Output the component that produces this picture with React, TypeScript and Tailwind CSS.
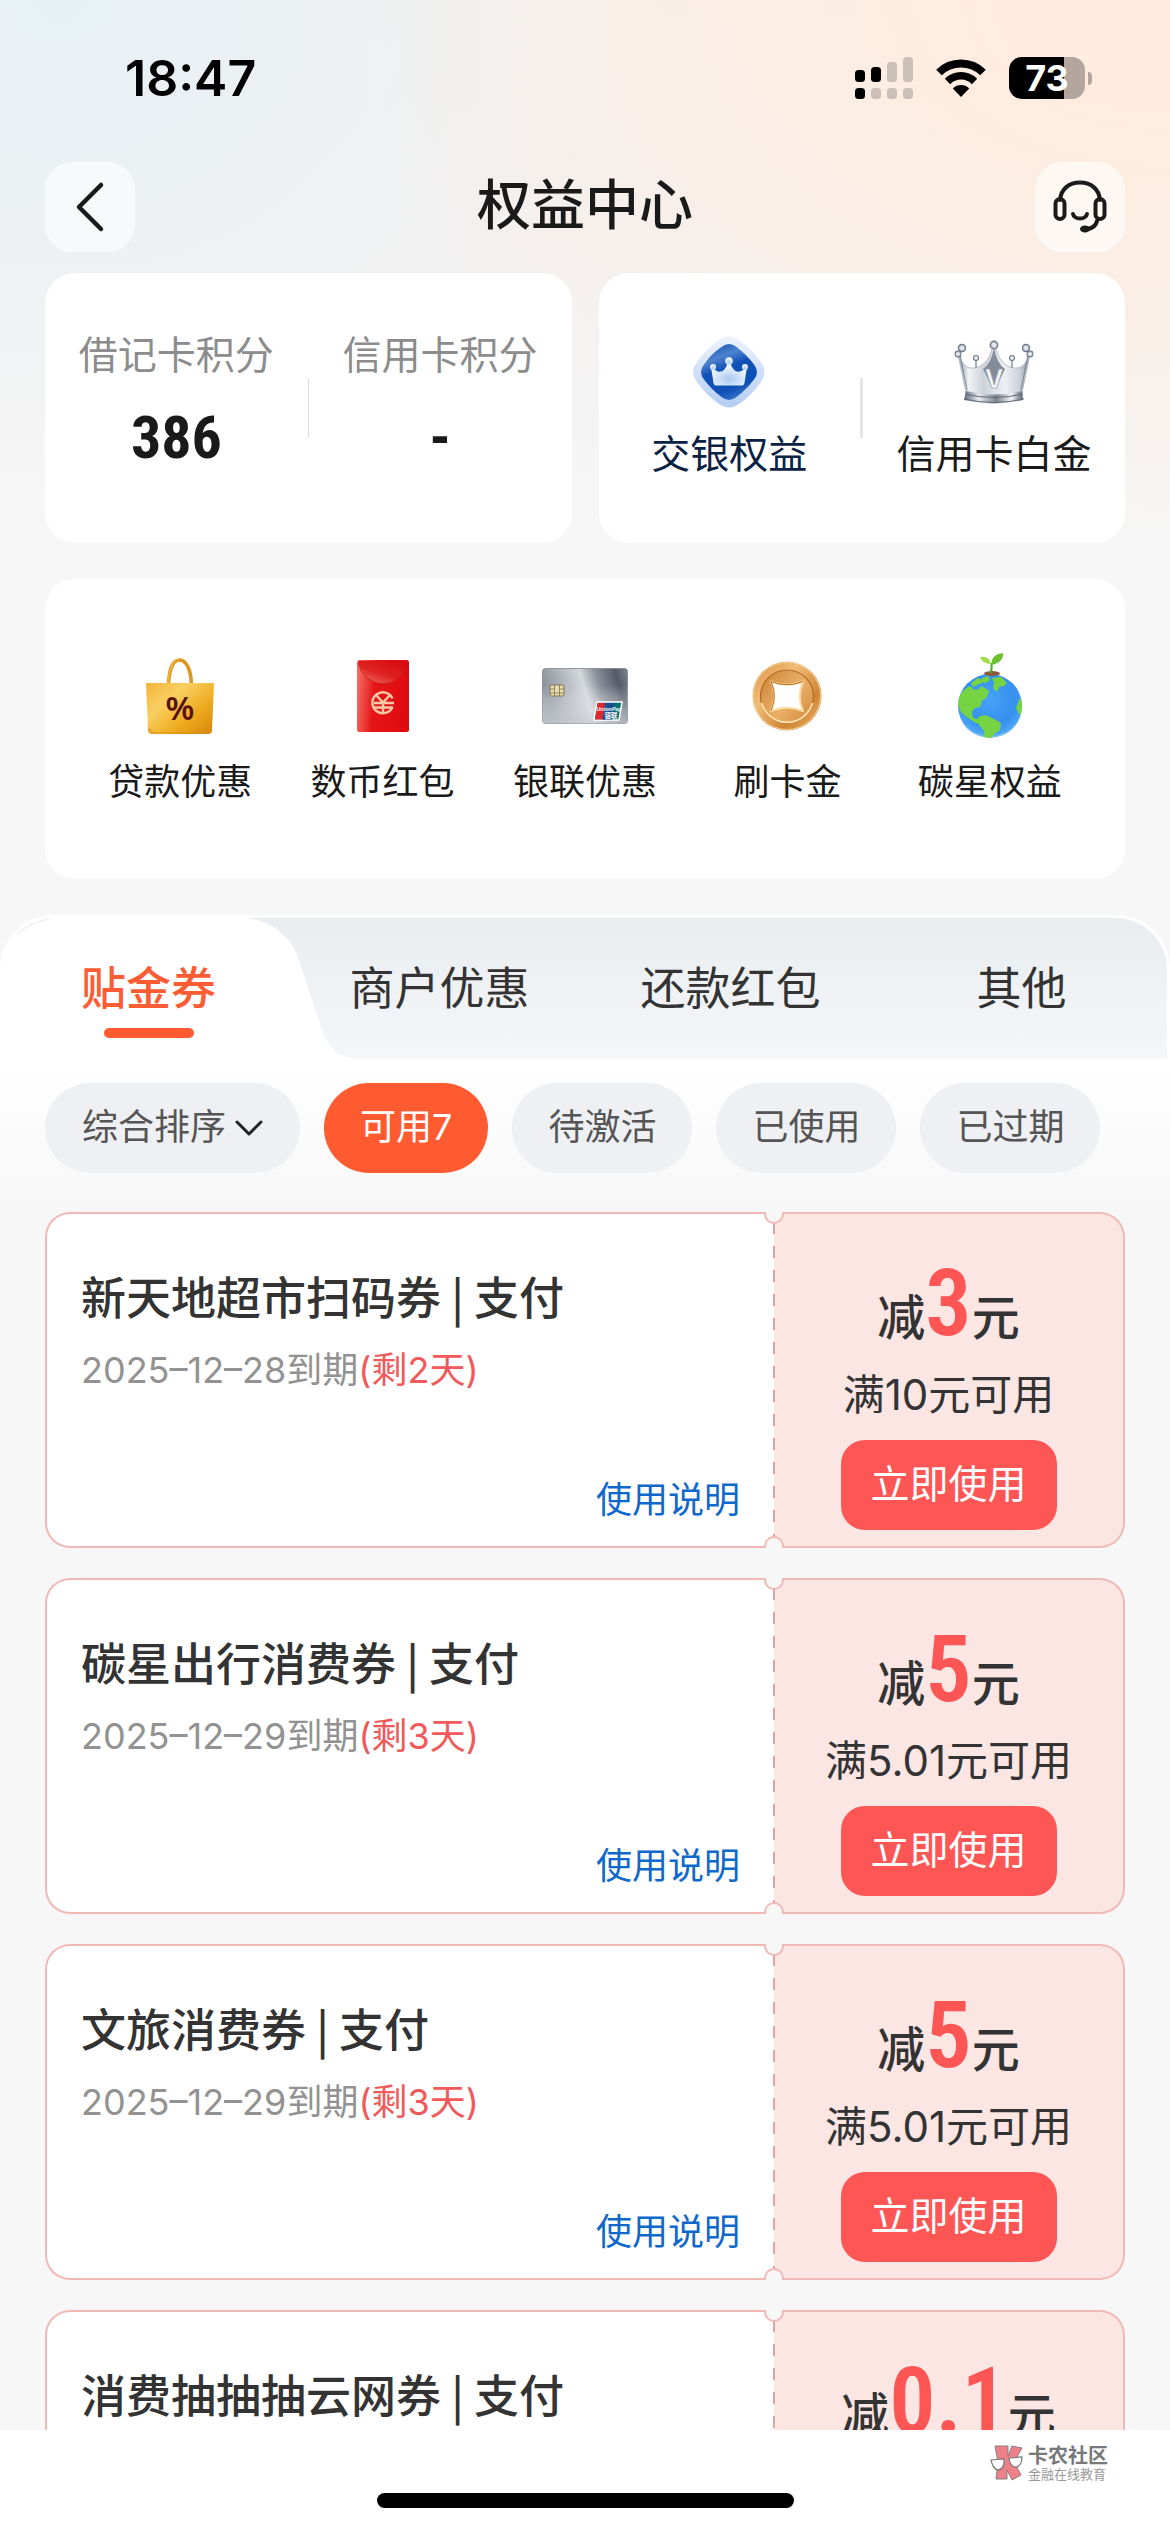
import type { ReactNode } from "react";

type Coupon = {
  title: string;
  date: string;
  left: string;
  amount: string;
  condition: string;
};

const coupons: Coupon[] = [
  { title: "新天地超市扫码券 | 支付", date: "2025–12–28到期", left: "(剩2天)", amount: "3", condition: "满10元可用" },
  { title: "碳星出行消费券 | 支付", date: "2025–12–29到期", left: "(剩3天)", amount: "5", condition: "满5.01元可用" },
  { title: "文旅消费券 | 支付", date: "2025–12–29到期", left: "(剩3天)", amount: "5", condition: "满5.01元可用" },
  { title: "消费抽抽抽云网券 | 支付", date: "2025–12–29到期", left: "(剩3天)", amount: "0.1", condition: "满1元可用" },
];

function SignalIcon() {
  return (
    <svg width="58" height="42" viewBox="0 0 58 42" aria-hidden="true">
      <g fill="#000">
        <rect x="0" y="13" width="10" height="12" rx="3.5" />
        <rect x="16" y="10" width="10" height="15" rx="3.5" />
        <rect x="0" y="31" width="10" height="11" rx="3.5" />
      </g>
      <g fill="#cbc0b9">
        <rect x="32" y="5" width="10" height="20" rx="3.5" />
        <rect x="48" y="0" width="10" height="25" rx="3.5" />
        <rect x="16" y="31" width="10" height="11" rx="3.5" />
        <rect x="32" y="31" width="10" height="11" rx="3.5" />
        <rect x="48" y="31" width="10" height="11" rx="3.5" />
      </g>
    </svg>
  );
}

function WifiIcon() {
  return (
    <svg width="52" height="38" viewBox="0 0 52 38" fill="none" aria-hidden="true">
      <path d="M4 13.5a31.5 31.5 0 0 1 44 0" stroke="#000" strokeWidth="8" />
      <path d="M12.5 22.5a19 19 0 0 1 27 0" stroke="#000" strokeWidth="7.5" />
      <path d="M26 38l-8.2-8.6a11.6 11.6 0 0 1 16.4 0z" fill="#000" />
    </svg>
  );
}

function Battery() {
  return (
    <div className="flex items-center gap-[3px]">
      <div className="flex h-[42px] w-[76px] items-center justify-center rounded-[13px] bg-[linear-gradient(90deg,#000_73%,#b2a69f_73%)] font-['Inter',sans-serif] text-[36px] leading-none font-bold text-white">
        73
      </div>
      <div className="h-[13px] w-[4px] rounded-r-full bg-[#b2a69f]" />
    </div>
  );
}

function BackIcon() {
  return (
    <svg width="30" height="52" viewBox="0 0 30 52" fill="none" stroke="#1a1a1a" strokeWidth="4.5" strokeLinecap="round" strokeLinejoin="round" aria-hidden="true">
      <path d="M26 4L4 26L26 48" />
    </svg>
  );
}

function HeadsetIcon() {
  return (
    <svg width="54" height="54" viewBox="0 0 54 54" fill="none" stroke="#1a1a1a" strokeWidth="4" strokeLinecap="round" aria-hidden="true">
      <path d="M7 20C8 9 16 2.500 27 2.500S46 9 47 20" />
      <rect x="2.500" y="19" width="9" height="20" rx="4.500" />
      <rect x="42.500" y="19" width="9" height="20" rx="4.500" />
      <path d="M20 34c1 6 13 6 14 0" />
      <path d="M44 41c-1 5-5 7-9 8" />
      <ellipse cx="32" cy="49" rx="5" ry="3.600" fill="#1a1a1a" stroke="none" />
    </svg>
  );
}

function DiamondIcon() {
  return (
    <svg width="72" height="72" viewBox="0 0 72 72" aria-hidden="true">
      <defs>
        <linearGradient id="dia-a" x1="0" y1="0" x2="0" y2="1">
          <stop offset="0" stopColor="#edf3fd" />
          <stop offset="1" stopColor="#b4cdf3" />
        </linearGradient>
        <linearGradient id="dia-b" x1="0.2" y1="0" x2="0.6" y2="1">
          <stop offset="0" stopColor="#1550b4" />
          <stop offset="0.25" stopColor="#4e83cf" />
          <stop offset="0.45" stopColor="#1152b8" />
          <stop offset="0.8" stopColor="#0c4fb5" />
          <stop offset="1" stopColor="#3b74cb" />
        </linearGradient>
        <radialGradient id="dia-c" cx="0.5" cy="0.7" r="0.6">
          <stop offset="0" stopColor="#a9c9f2" />
          <stop offset="1" stopColor="#f3f8ff" />
        </radialGradient>
      </defs>
      <path d="M26 4Q36-3.500 46 4Q60 14 68 26Q75 36 68 46Q58 60 46 68Q36 75 26 68Q12 58 4 46Q-3.500 36 4 26Q13 13 26 4Z" fill="url(#dia-a)" />
      <path d="M28.500 11Q36 5 43.500 11Q54 19 61 28.500Q67 36 61 43.500Q53 54 43.500 61Q36 67 28.500 61Q18 53 11 43.500Q5 36 11 28.500Q18 18 28.500 11Z" fill="url(#dia-b)" />
      <g fill="url(#dia-c)">
        <path d="M18 31l5.500 4Q31 38 34.500 27.500h3Q41 38 48.500 35l5.500-4-2.500 16q-.5 2.500-2.500 2.500H23q-2 0-2.500-2.500z" />
        <circle cx="36" cy="25" r="3.800" />
        <circle cx="20" cy="31" r="3" />
        <circle cx="52" cy="31" r="3" />
      </g>
    </svg>
  );
}

function CrownIcon() {
  return (
    <svg width="80" height="64" viewBox="0 0 80 64" aria-hidden="true">
      <defs>
        <linearGradient id="crown-a" x1="0" y1="0" x2="1" y2="0">
          <stop offset="0" stopColor="#929ba7" />
          <stop offset="0.15" stopColor="#f0f2f5" />
          <stop offset="0.35" stopColor="#cdd2d8" />
          <stop offset="0.65" stopColor="#edf0f3" />
          <stop offset="0.85" stopColor="#ccd2d9" />
          <stop offset="1" stopColor="#8c95a3" />
        </linearGradient>
        <linearGradient id="crown-b" x1="0" y1="0" x2="1" y2="0">
          <stop offset="0" stopColor="#5b6676" />
          <stop offset="0.25" stopColor="#e9ecf0" />
          <stop offset="0.55" stopColor="#79838f" />
          <stop offset="0.8" stopColor="#f4f5f7" />
          <stop offset="1" stopColor="#566172" />
        </linearGradient>
        <radialGradient id="crown-c">
          <stop offset="0" stopColor="#fff" />
          <stop offset="0.5" stopColor="#cfd4dc" />
          <stop offset="1" stopColor="#4e5969" />
        </radialGradient>
      </defs>
      <path d="M4 14Q10 30 20 28Q33 27 38.500 8h3Q47 27 60 28Q70 30 76 14L68 53Q40 60 12 53Z" fill="url(#crown-a)" stroke="#a9b1bc" strokeWidth="0.800" />
      <path d="M6 14l7 36M74 14l-7 36" stroke="#7c8695" strokeWidth="1" />
      <path d="M40 8Q43 24 51 29L41.500 48h-3L29 29Q37 24 40 8Z" fill="#858c99" />
      <text x="40" y="48" textAnchor="middle" fontFamily="Inter, sans-serif" fontWeight="700" fontSize="25" fill="#f3f5f7" stroke="#8b94a1" strokeWidth="0.700">V</text>
      <path d="M22 28V20M58 28V20" stroke="#8b95a3" strokeWidth="1.500" />
      <path d="M12 51Q40 58 68 51L69 60Q40 67 10 60Z" fill="url(#crown-b)" />
      <path d="M11 54Q40 61 69 54M10 59Q40 66 70 59" fill="none" stroke="#5f6978" strokeWidth="1" />
      <g fill="url(#crown-c)">
        <circle cx="40" cy="5" r="4.400" />
        <circle cx="8" cy="8" r="4.200" />
        <circle cx="72" cy="8" r="4.200" />
        <circle cx="4" cy="14" r="3.400" />
        <circle cx="76" cy="14" r="3.400" />
        <circle cx="22" cy="18" r="3" />
        <circle cx="58" cy="18" r="3" />
      </g>
    </svg>
  );
}

function BagIcon() {
  return (
    <svg width="68" height="78" viewBox="0 0 68 78" aria-hidden="true">
      <defs>
        <linearGradient id="bag-a" x1="0" y1="0" x2="1" y2="0.900">
          <stop offset="0" stopColor="#f2b53c" />
          <stop offset="0.35" stopColor="#f9cf62" />
          <stop offset="0.7" stopColor="#eeaa1e" />
          <stop offset="1" stopColor="#d98a0c" />
        </linearGradient>
      </defs>
      <path d="M22.500 28C23 12 27 3 33.500 3S45 12 45.500 28" fill="none" stroke="#e0961c" strokeWidth="3.600" />
      <path d="M22 28C22.500 12 27 2.500 33 2" fill="none" stroke="#f4bd4e" strokeWidth="1.200" />
      <path d="M0 26H68L66 73Q66 77 62 77H6Q2 77 2 73Z" fill="url(#bag-a)" />
      <path d="M2 70L8 75H60L66 70L65.500 74Q65 77 62 77H6Q2.500 77 2 74Z" fill="#d88b10" opacity="0.450" />
      <text x="34" y="63" textAnchor="middle" fontFamily="Noto Sans, sans-serif" fontWeight="600" fontSize="33" fill="#5b120c">%</text>
    </svg>
  );
}

function EnvelopeIcon() {
  return (
    <svg width="54" height="72" viewBox="0 0 54 72" aria-hidden="true">
      <defs>
        <linearGradient id="env-a" x1="0" y1="0.200" x2="1" y2="0.300">
          <stop offset="0" stopColor="#f56e66" />
          <stop offset="0.35" stopColor="#e51618" />
          <stop offset="1" stopColor="#e00a0e" />
        </linearGradient>
        <linearGradient id="env-b" x1="0" y1="1" x2="0.800" y2="0">
          <stop offset="0" stopColor="#f3756a" />
          <stop offset="0.5" stopColor="#dd2422" />
          <stop offset="1" stopColor="#d80a10" />
        </linearGradient>
      </defs>
      <rect x="1" width="52" height="72" rx="2.500" fill="url(#env-a)" />
      <path d="M2 1H52Q47 23 27 24Q7 22 2 1Z" fill="url(#env-b)" />
      <path d="M2 3Q8 23 27 24Q47 23 52 3" fill="none" stroke="#c41416" strokeWidth="0.700" />
      <g fill="none" stroke="#fbc9a6" strokeWidth="2.400">
        <path d="M36.500 47A10.500 10.500 0 1 1 36.500 38.500" />
        <path d="M20 35L27 42.500L34 35M27 42.500V53.500M18 43H38M18 47.500H37" />
      </g>
    </svg>
  );
}

function BankCardIcon() {
  return (
    <svg width="86" height="56" viewBox="0 0 86 56" aria-hidden="true">
      <defs>
        <linearGradient id="card-a" x1="0" y1="0.200" x2="1" y2="0">
          <stop offset="0" stopColor="#8f949d" />
          <stop offset="0.45" stopColor="#d5d8dd" />
          <stop offset="0.62" stopColor="#8c929c" />
          <stop offset="0.85" stopColor="#535b68" />
          <stop offset="1" stopColor="#7e858f" />
        </linearGradient>
        <linearGradient id="card-b" x1="0" y1="0" x2="0" y2="1">
          <stop offset="0.3" stopColor="#fff" stopOpacity="0" />
          <stop offset="1" stopColor="#cfd3d9" stopOpacity="0.700" />
        </linearGradient>
      </defs>
      <rect x="0.500" y="0.500" width="85" height="55" rx="3" fill="url(#card-a)" stroke="#7e858f" strokeWidth="0.800" />
      <rect x="0.500" y="0.500" width="85" height="55" rx="3" fill="url(#card-b)" />
      <rect x="8" y="17" width="14" height="11" rx="2" fill="#e9dcaf" stroke="#6f6646" strokeWidth="0.800" />
      <path d="M8 21h4.500v-4M8 25h4.500v3M22 21h-4.500v-4M22 25h-4.500v3M12.500 21v4h5v-4" fill="none" stroke="#6f6646" strokeWidth="0.700" />
      <path d="M55 34H80L77 52H52Z" fill="#04706f" stroke="#fff" strokeWidth="1.500" />
      <path d="M55.500 35H66L63 51.500H53Z" fill="#e0282f" />
      <path d="M63 35H73L70 51.500H60.500Z" fill="#164f92" />
      <text x="67" y="42.500" textAnchor="middle" fontFamily="Liberation Sans, sans-serif" fontStyle="italic" fontWeight="700" fontSize="5.500" fill="#fff">UnionPay</text>
      <text x="69" y="50" textAnchor="middle" fontFamily="Noto Sans CJK SC, sans-serif" fontWeight="700" fontSize="6.500" fill="#fff">银联</text>
    </svg>
  );
}

function CoinIcon() {
  return (
    <svg width="70" height="70" viewBox="0 0 70 70" aria-hidden="true">
      <defs>
        <linearGradient id="coin-a" x1="0" y1="0" x2="1" y2="1">
          <stop offset="0" stopColor="#d98f45" />
          <stop offset="0.35" stopColor="#f2bd77" />
          <stop offset="0.7" stopColor="#cf8435" />
          <stop offset="1" stopColor="#f0b66b" />
        </linearGradient>
        <linearGradient id="coin-b" x1="0" y1="0.200" x2="1" y2="1">
          <stop offset="0" stopColor="#cf8a3e" />
          <stop offset="0.5" stopColor="#eab068" />
          <stop offset="1" stopColor="#cf873b" />
        </linearGradient>
      </defs>
      <circle cx="35" cy="35" r="34.500" fill="url(#coin-a)" />
      <circle cx="35" cy="35" r="33.500" fill="none" stroke="#f4cd92" strokeWidth="1" />
      <circle cx="35" cy="35.500" r="26.500" fill="url(#coin-b)" stroke="#b46c25" strokeWidth="1.200" />
      <path d="M9.500 42A26.500 26.500 0 0 0 60.500 42" fill="none" stroke="#ffe0ac" strokeWidth="1.800" />
      <path d="M19 20.500Q35 27 51 20.500Q44.500 35 51 50Q35 43.500 19 50Q25.500 35 19 20.500Z" fill="#fff" stroke="#ffdca5" strokeWidth="2" strokeLinejoin="round" />
      <path d="M19 20.500Q35 27 51 20.500M19 20.500Q25.500 35 19 50" fill="none" stroke="#aa6420" strokeWidth="0.900" />
    </svg>
  );
}

function EarthIcon() {
  return (
    <svg width="66" height="88" viewBox="0 0 66 88" aria-hidden="true">
      <defs>
        <radialGradient id="earth-a" cx="0.500" cy="0.400" r="0.620">
          <stop offset="0" stopColor="#46a3f6" />
          <stop offset="0.65" stopColor="#3590ef" />
          <stop offset="0.88" stopColor="#4aa4f4" />
          <stop offset="1" stopColor="#a6dcfb" />
        </radialGradient>
        <clipPath id="earth-clip">
          <circle cx="33" cy="54" r="32" />
        </clipPath>
      </defs>
      <circle cx="33" cy="54" r="32" fill="url(#earth-a)" />
      <g clipPath="url(#earth-clip)" fill="#76d443">
        <path d="M0 50Q4 38 13 34l4 4 5-1 2-3 4 2 4 3-2 6-5 4-2 6-5 1-3 4 1 6 5 1 3 5-5-1-8-5-7-6z" />
        <path d="M14 31l7-5 5 2-1 3-5 2-4 2zM25 26l6-2 2 4-4 3-4-1z" />
        <path d="M35 26l9-1 6 6-3 3-5 1-2 5-4-4 1-5z" />
        <path d="M21 65l7-2 7 3 9 5-1 7-6 4-5 9-4-2-1-10-5-6z" />
        <path d="M66 45l-4 3-3 8 3 6 5 2z" />
      </g>
      <ellipse cx="35" cy="21.500" rx="8" ry="2.400" fill="#8d5b3c" />
      <path d="M34 21Q35 15 34.500 11" fill="none" stroke="#4da81f" strokeWidth="2" />
      <path d="M34 12Q25 12 23 5Q32 3 34 12Z" fill="#a5db53" />
      <path d="M34.500 13Q34 2 46 1Q47 10 34.500 13Z" fill="#6cc032" />
    </svg>
  );
}

function KanongLogo() {
  return (
    <svg width="34" height="36" viewBox="0 0 34 36" aria-hidden="true">
      <g fill="#ee8089" stroke="#8a7c7e" strokeWidth="1">
        <path d="M5 1L18 1L18 11L22 1L32 3L24 17L31 30L22 35L17 25V34L6 34L8 17Z" />
      </g>
      <g fill="#fff" stroke="#77787a" strokeWidth="1.200">
        <path d="M1 15L14 14Q15 24 8 25Q3 24 1 15Z" />
        <path d="M19 13L32 12Q32 21 26 22Q20 22 19 13Z" />
      </g>
    </svg>
  );
}

function ServiceItem({ icon, label }: { icon: ReactNode; label: string }) {
  return (
    <button type="button" className="flex flex-1 flex-col items-center gap-[14px]">
      <span className="flex h-[90px] items-center justify-center">{icon}</span>
      <span className="text-[36px] leading-[48px] whitespace-nowrap text-[#1a1a1a]">{label}</span>
    </button>
  );
}

function CouponCard({ coupon }: { coupon: Coupon }) {
  return (
    <article className="relative flex">
      <div className="flex min-h-[336px] flex-1 flex-col rounded-l-[25px] border-2 border-r-0 border-[#f0b9b5] bg-white px-[34px] pt-[52px] pb-[25px]">
        <h2 className="text-[45px] leading-[60px] font-medium text-[#333]">{coupon.title}</h2>
        <p className="mt-[20px] font-['Inter','Noto_Sans_CJK_SC',sans-serif] text-[36px] leading-[48px] text-[#929292]">
          {coupon.date}
          <span className="text-[#f05a5a]">{coupon.left}</span>
        </p>
        <a href="#usage" className="mt-auto self-end text-[36px] leading-[48px] text-[#0f68cc]">
          使用说明
        </a>
      </div>
      <div className="relative flex w-[32.5%] flex-col items-center rounded-r-[25px] border-2 border-l-0 border-[#f0b9b5] bg-[#fbe6e4] pb-[16px]">
        <p className="mt-auto flex items-baseline text-[48px] leading-[96px] font-medium text-[#333]">
          减
          <span className="font-['Roboto_Condensed','Roboto',sans-serif] text-[92px] leading-[96px] font-semibold text-[#fe5555]">{coupon.amount}</span>
          元
        </p>
        <p className="mt-[9px] font-['Inter','Noto_Sans_CJK_SC',sans-serif] text-[42px] leading-[48px] text-[#333]">{coupon.condition}</p>
        <button type="button" className="mt-[21px] h-[90px] w-[216px] rounded-[24px] bg-[#fe5555] pb-[8px] text-[39px] leading-[48px] text-white">
          立即使用
        </button>
        <span className="absolute inset-y-[8px] -left-px w-[2px] bg-[repeating-linear-gradient(180deg,#dca5a3_0_12px,transparent_12px_24px)]" />
        <span className="absolute -top-[2px] -left-[10px] h-[12px] w-[20px] rounded-b-full border-2 border-t-0 border-[#f0b9b5] bg-[#f7f7f7]" />
        <span className="absolute -bottom-[2px] -left-[10px] h-[12px] w-[20px] rounded-t-full border-2 border-b-0 border-[#f0b9b5] bg-[#f7f7f7]" />
      </div>
    </article>
  );
}

export default function App() {
  return (
    <div className="flex h-screen flex-col bg-[#f7f7f7] font-['Noto_Sans_CJK_SC',sans-serif] text-[#1a1a1a]">
      <main className="min-h-0 flex-1 overflow-y-auto bg-[radial-gradient(ellipse_560px_460px_at_60px_0px,#e7f1f5,transparent),radial-gradient(ellipse_840px_540px_at_1170px_0px,#ffecde_20%,transparent),linear-gradient(180deg,#f3f0ef_0px,#f3f1f1_260px,#f7f7f7_560px)] bg-no-repeat [scrollbar-width:none]">
        <div className="flex h-[108px] items-end pr-[78px] pl-[125px]">
          <div className="flex h-[60px] flex-1 items-center justify-between">
            <time className="font-['Inter',sans-serif] text-[50px] leading-none font-semibold text-black">18:47</time>
            <div className="flex items-center gap-[22px]">
              <SignalIcon />
              <WifiIcon />
              <Battery />
            </div>
          </div>
        </div>

        <header className="mt-[54px] flex items-center justify-between px-[45px]">
          <button type="button" aria-label="返回" className="flex size-[90px] items-center justify-center rounded-[27px] bg-white/60">
            <BackIcon />
          </button>
          <h1 className="pb-[10px] text-[54px] leading-[72px] font-medium">权益中心</h1>
          <button type="button" aria-label="客服" className="flex size-[90px] items-center justify-center rounded-[27px] bg-white/60">
            <HeadsetIcon />
          </button>
        </header>

        <section className="mt-[21px] grid grid-cols-2 gap-[27px] px-[45px]">
          <div className="flex items-center rounded-[30px] bg-white">
            <div className="flex flex-1 flex-col items-center gap-[26px] pt-[55px] pb-[69px]">
              <span className="text-[39px] leading-[48px] text-[#8c8c8c]">借记卡积分</span>
              <span className="font-['Roboto_Condensed','Roboto',sans-serif] text-[60px] leading-[72px] font-bold">386</span>
            </div>
            <span className="h-[60px] w-px bg-[#dcdde0]" />
            <div className="flex flex-1 flex-col items-center gap-[26px] pt-[55px] pb-[69px]">
              <span className="text-[39px] leading-[48px] text-[#8c8c8c]">信用卡积分</span>
              <span className="font-['Roboto_Condensed','Roboto',sans-serif] text-[60px] leading-[72px] font-bold">-</span>
            </div>
          </div>
          <div className="flex items-center rounded-[30px] bg-white">
            <button type="button" className="flex flex-1 flex-col items-center gap-[16px] pt-[60px] pb-[68px]">
              <span className="flex h-[78px] items-center"><DiamondIcon /></span>
              <span className="text-[39px] leading-[48px] text-[#0b2244]">交银权益</span>
            </button>
            <span className="h-[60px] w-[3px] bg-[#e3e4e8]" />
            <button type="button" className="flex flex-1 flex-col items-center gap-[16px] pt-[60px] pb-[68px]">
              <span className="flex h-[78px] items-center"><CrownIcon /></span>
              <span className="text-[39px] leading-[48px]">信用卡白金</span>
            </button>
          </div>
        </section>

        <section className="mx-[45px] mt-[36px] flex rounded-[30px] bg-white px-[34px] pt-[72px] pb-[76px]">
          <ServiceItem icon={<BagIcon />} label="贷款优惠" />
          <ServiceItem icon={<EnvelopeIcon />} label="数币红包" />
          <ServiceItem icon={<BankCardIcon />} label="银联优惠" />
          <ServiceItem icon={<CoinIcon />} label="刷卡金" />
          <ServiceItem icon={<EarthIcon />} label="碳星权益" />
        </section>

        <section className="mt-[36px]">
          <div role="tablist" className="relative grid h-[144px] grid-cols-4 rounded-t-[54px] border-x-[3px] border-t-[3px] border-white bg-linear-to-b from-[#e9edf0] to-[#f5f6f9]">
            <svg className="absolute top-0 left-0" width="360" height="141" viewBox="0 0 360 141" aria-hidden="true">
              <path d="M0 50C0 20 22 0 50 0H243C270 3 290 20 297 45L320 115Q329 141 357 141H0Z" fill="#fff" />
              <path d="M14 17Q26 4 46 1" fill="none" stroke="#eef0f1" strokeWidth="1.500" />
            </svg>
            <button type="button" role="tab" aria-selected="true" className="relative flex flex-col items-center pt-[38px] text-[45px] leading-[60px] font-medium text-[#fb5c33]">
              贴金券
              <span className="mt-[12px] h-[10px] w-[90px] rounded-full bg-[#ff5a30]" />
            </button>
            <button type="button" role="tab" aria-selected="false" className="flex justify-center pt-[38px] text-[45px] leading-[60px] text-[#333]">商户优惠</button>
            <button type="button" role="tab" aria-selected="false" className="flex justify-center pt-[38px] text-[45px] leading-[60px] text-[#333]">还款红包</button>
            <button type="button" role="tab" aria-selected="false" className="flex justify-center pt-[38px] text-[45px] leading-[60px] text-[#333]">其他</button>
          </div>

          <div className="flex gap-[24px] bg-linear-to-b from-white to-[#f7f7f7] px-[45px] pt-[24px] pb-[39px] font-['Inter','Noto_Sans_CJK_SC',sans-serif] text-[36px] leading-[48px] text-[#555]">
            <div className="relative">
              <select aria-label="排序方式" className="h-[90px] w-[255px] appearance-none rounded-full bg-[#eff0f4] px-[37px] pb-[2px]">
                <option>综合排序</option>
              </select>
              <svg className="pointer-events-none absolute top-[36px] right-[37px]" width="28" height="18" viewBox="0 0 28 18" fill="none" stroke="#222" strokeWidth="3" strokeLinecap="round" strokeLinejoin="round" aria-hidden="true">
                <path d="M2 3L14 15L26 3" />
              </svg>
            </div>
            <button type="button" className="h-[90px] rounded-full bg-[#ff5a30] px-[36px] pb-[2px] text-white">可用7</button>
            <button type="button" className="h-[90px] rounded-full bg-[#eff0f4] px-[36px] pb-[2px]">待激活</button>
            <button type="button" className="h-[90px] rounded-full bg-[#eff0f4] px-[36px] pb-[2px]">已使用</button>
            <button type="button" className="h-[90px] rounded-full bg-[#eff0f4] px-[36px] pb-[2px]">已过期</button>
          </div>

          <div className="flex flex-col gap-[30px] px-[45px] pb-[30px]">
            {coupons.map((coupon) => (
              <CouponCard key={coupon.title} coupon={coupon} />
            ))}
          </div>
        </section>
      </main>

      <footer className="flex flex-col items-center bg-white pt-[14px] pb-[24px]">
        <div className="flex items-center gap-[4px] self-end pr-[62px]">
          <KanongLogo />
          <div className="flex flex-col">
            <span className="text-[20px] leading-[22px] font-bold text-[#77787a]">卡农社区</span>
            <span className="text-[13px] leading-[15px] text-[#999]">金融在线教育</span>
          </div>
        </div>
        <span className="mt-[12px] h-[15px] w-[417px] rounded-full bg-black" />
      </footer>
    </div>
  );
}
